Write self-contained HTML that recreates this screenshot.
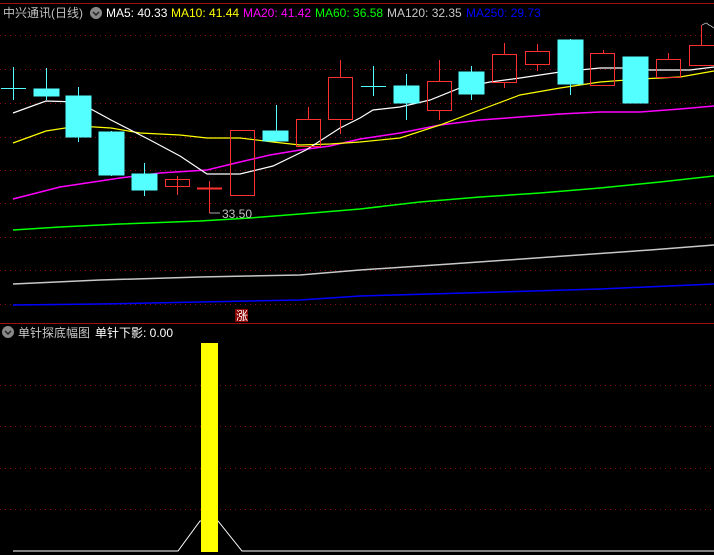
<!DOCTYPE html>
<html><head><meta charset="utf-8"><style>
body{margin:0;background:#000;width:714px;height:555px;overflow:hidden;}
svg{display:block}
text{font-family:"Liberation Sans","Noto Sans CJK SC",sans-serif;font-size:12px}
</style></head><body>
<svg width="714" height="555" xmlns="http://www.w3.org/2000/svg" shape-rendering="crispEdges">
<rect width="714" height="555" fill="#000"/>
<line x1="0" y1="3.5" x2="714" y2="3.5" stroke="#a01010"/>
<line x1="0" y1="323.5" x2="714" y2="323.5" stroke="#a01010"/>
<g stroke="#8a1010" stroke-dasharray="1,4">
<line x1="0" y1="35.5" x2="714" y2="35.5"/><line x1="0" y1="69.5" x2="714" y2="69.5"/>
<line x1="0" y1="103.5" x2="714" y2="103.5"/><line x1="0" y1="137.5" x2="714" y2="137.5"/>
<line x1="0" y1="170.5" x2="714" y2="170.5"/><line x1="0" y1="203.5" x2="714" y2="203.5"/>
<line x1="0" y1="237.5" x2="714" y2="237.5"/><line x1="0" y1="270.5" x2="714" y2="270.5"/>
<line x1="0" y1="304.5" x2="714" y2="304.5"/>
<line x1="0" y1="385.5" x2="714" y2="385.5"/><line x1="0" y1="426.5" x2="714" y2="426.5"/>
<line x1="0" y1="468.5" x2="714" y2="468.5"/><line x1="0" y1="509.5" x2="714" y2="509.5"/>
</g>
<!-- MAs -->
<g fill="none" shape-rendering="auto" stroke-width="1.2">
<polyline stroke="#0000ff" stroke-width="1.5" points="13,305 100,304 200,302 300,300 360,296 500,292 600,289 714,284"/>
<polyline stroke="#c8c8c8" stroke-width="1.5" points="13,284 100,280 200,277 300,275 360,270 450,264 550,257 650,250 714,245"/>
<polyline stroke="#00ff00" stroke-width="1.5" points="13,230 60,227 120,224 200,221 250,218 300,214 360,209 420,202 480,197 540,193 600,188 660,182 714,176"/>
<polyline stroke="#ff00ff" stroke-width="1.5" points="13,199 60,187 120,178 160,173 207,170 240,162 270,155 300,150 330,146 360,139 400,133 440,125 480,120 520,117 560,114 600,112 640,112 680,109 714,106"/>
<polyline stroke="#ffff00" points="13,143 46,131 78,126 111,128 140,133 180,135 207,138 240,138 273,142 300,145 330,144 360,142 400,138 440,125 480,110 520,95 560,88 600,82 640,79 680,77 714,71"/>
<polyline stroke="#ffffff" points="13,113 46,101 78,102 111,120 150,140 180,156 207,174 240,174 273,166 306,150 340,128 360,118 373,110 400,107 430,100 460,88 490,82 520,78 560,72 600,68 625,68 650,70 690,70 714,67"/>
</g>
<!-- candles -->
<g fill="#54ffff" stroke="#54ffff">
<line x1="13.5" y1="67" x2="13.5" y2="100"/><line x1="1" y1="88.5" x2="26" y2="88.5"/>
<line x1="46.5" y1="68" x2="46.5" y2="100"/><rect x="34" y="89" width="25" height="7"/>
<line x1="78.5" y1="87" x2="78.5" y2="142"/><rect x="66" y="96" width="25" height="41"/>
<line x1="111.5" y1="131" x2="111.5" y2="176"/><rect x="99" y="132" width="25" height="43"/>
<line x1="144.5" y1="163" x2="144.5" y2="196"/><rect x="132" y="174" width="25" height="16"/>
<line x1="276.5" y1="105" x2="276.5" y2="131"/><rect x="263" y="131" width="25" height="10"/>
<line x1="373.5" y1="66" x2="373.5" y2="96"/><line x1="361" y1="86.5" x2="386" y2="86.5"/>
<line x1="406.5" y1="74" x2="406.5" y2="120"/><rect x="394" y="86" width="25" height="17"/>
<line x1="471.5" y1="66" x2="471.5" y2="100"/><rect x="459" y="72" width="25" height="22"/>
<line x1="570.5" y1="39" x2="570.5" y2="95"/><rect x="558" y="40" width="25" height="44"/>
<rect x="623" y="57" width="25" height="46"/>
</g>
<g fill="none" stroke="#ff3030">
<line x1="177.5" y1="176" x2="177.5" y2="195"/><rect x="165.5" y="179.5" width="24" height="7"/>
<line x1="209.5" y1="181" x2="209.5" y2="213"/><line x1="197" y1="188.5" x2="222" y2="188.5" stroke-width="2"/>
<rect x="230.5" y="130.5" width="24" height="65"/>
<line x1="308.5" y1="107" x2="308.5" y2="119"/><rect x="296.5" y="119.5" width="24" height="27"/>
<line x1="340.5" y1="60" x2="340.5" y2="77"/><line x1="340.5" y1="119" x2="340.5" y2="134"/><rect x="328.5" y="77.5" width="24" height="42"/>
<line x1="439.5" y1="60" x2="439.5" y2="81"/><line x1="439.5" y1="110" x2="439.5" y2="120"/><rect x="427.5" y="81.5" width="24" height="29"/>
<line x1="504.5" y1="43" x2="504.5" y2="54"/><line x1="504.5" y1="82" x2="504.5" y2="88"/><rect x="492.5" y="54.5" width="24" height="28"/>
<line x1="537.5" y1="44" x2="537.5" y2="51"/><line x1="537.5" y1="64" x2="537.5" y2="71"/><rect x="525.5" y="51.5" width="24" height="13"/>
<line x1="603.5" y1="50" x2="603.5" y2="53"/><rect x="590.5" y="53.5" width="24" height="32"/>
<line x1="668.5" y1="53" x2="668.5" y2="59"/><rect x="656.5" y="59.5" width="24" height="18"/>
<line x1="701.5" y1="25" x2="701.5" y2="45"/><rect x="689.5" y="45.5" width="25" height="20"/>
</g>
<path d="M702 25 L706 23 L714 28" stroke="#aaa" fill="none"/>
<line x1="209.5" y1="213" x2="220" y2="213" stroke="#aaa"/>
<text x="222" y="218" fill="#c0c0c0" font-size="12">33.50</text>
<rect x="235" y="309" width="13" height="13" fill="#8a0000"/>
<text x="236" y="320" fill="#fff" font-size="11">涨</text>
<!-- header -->
<text x="3" y="17" fill="#c0c0c0" font-size="13">中兴通讯(日线)</text>
<circle cx="96" cy="13" r="6" fill="#888"/><path d="M93 12 L96 15 L99 12" stroke="#222" fill="none" stroke-width="1.5" shape-rendering="auto"/>
<text x="106" y="17" fill="#fff">MA5: 40.33</text>
<text x="171" y="17" fill="#ffff00">MA10: 41.44</text>
<text x="243" y="17" fill="#ff00ff">MA20: 41.42</text>
<text x="315" y="17" fill="#00ff00">MA60: 36.58</text>
<text x="387" y="17" fill="#c8c8c8">MA120: 32.35</text>
<text x="466" y="17" fill="#0000ff">MA250: 29.73</text>
<!-- lower panel -->
<circle cx="8" cy="332" r="6" fill="#888"/><path d="M5 331 L8 334 L11 331" stroke="#222" fill="none" stroke-width="1.5" shape-rendering="auto"/>
<text x="18" y="337" fill="#c8c8c8" font-size="12">单针探底幅图</text>
<text x="95" y="337" fill="#fff" font-size="12">单针下影: 0.00</text>
<polyline fill="none" stroke="#fff" shape-rendering="auto" points="13,551 178,551 200,521 218,521 242,551 714,551"/>
<rect x="201" y="343" width="17" height="209" fill="#ffff00"/>
</svg>
</body></html>
